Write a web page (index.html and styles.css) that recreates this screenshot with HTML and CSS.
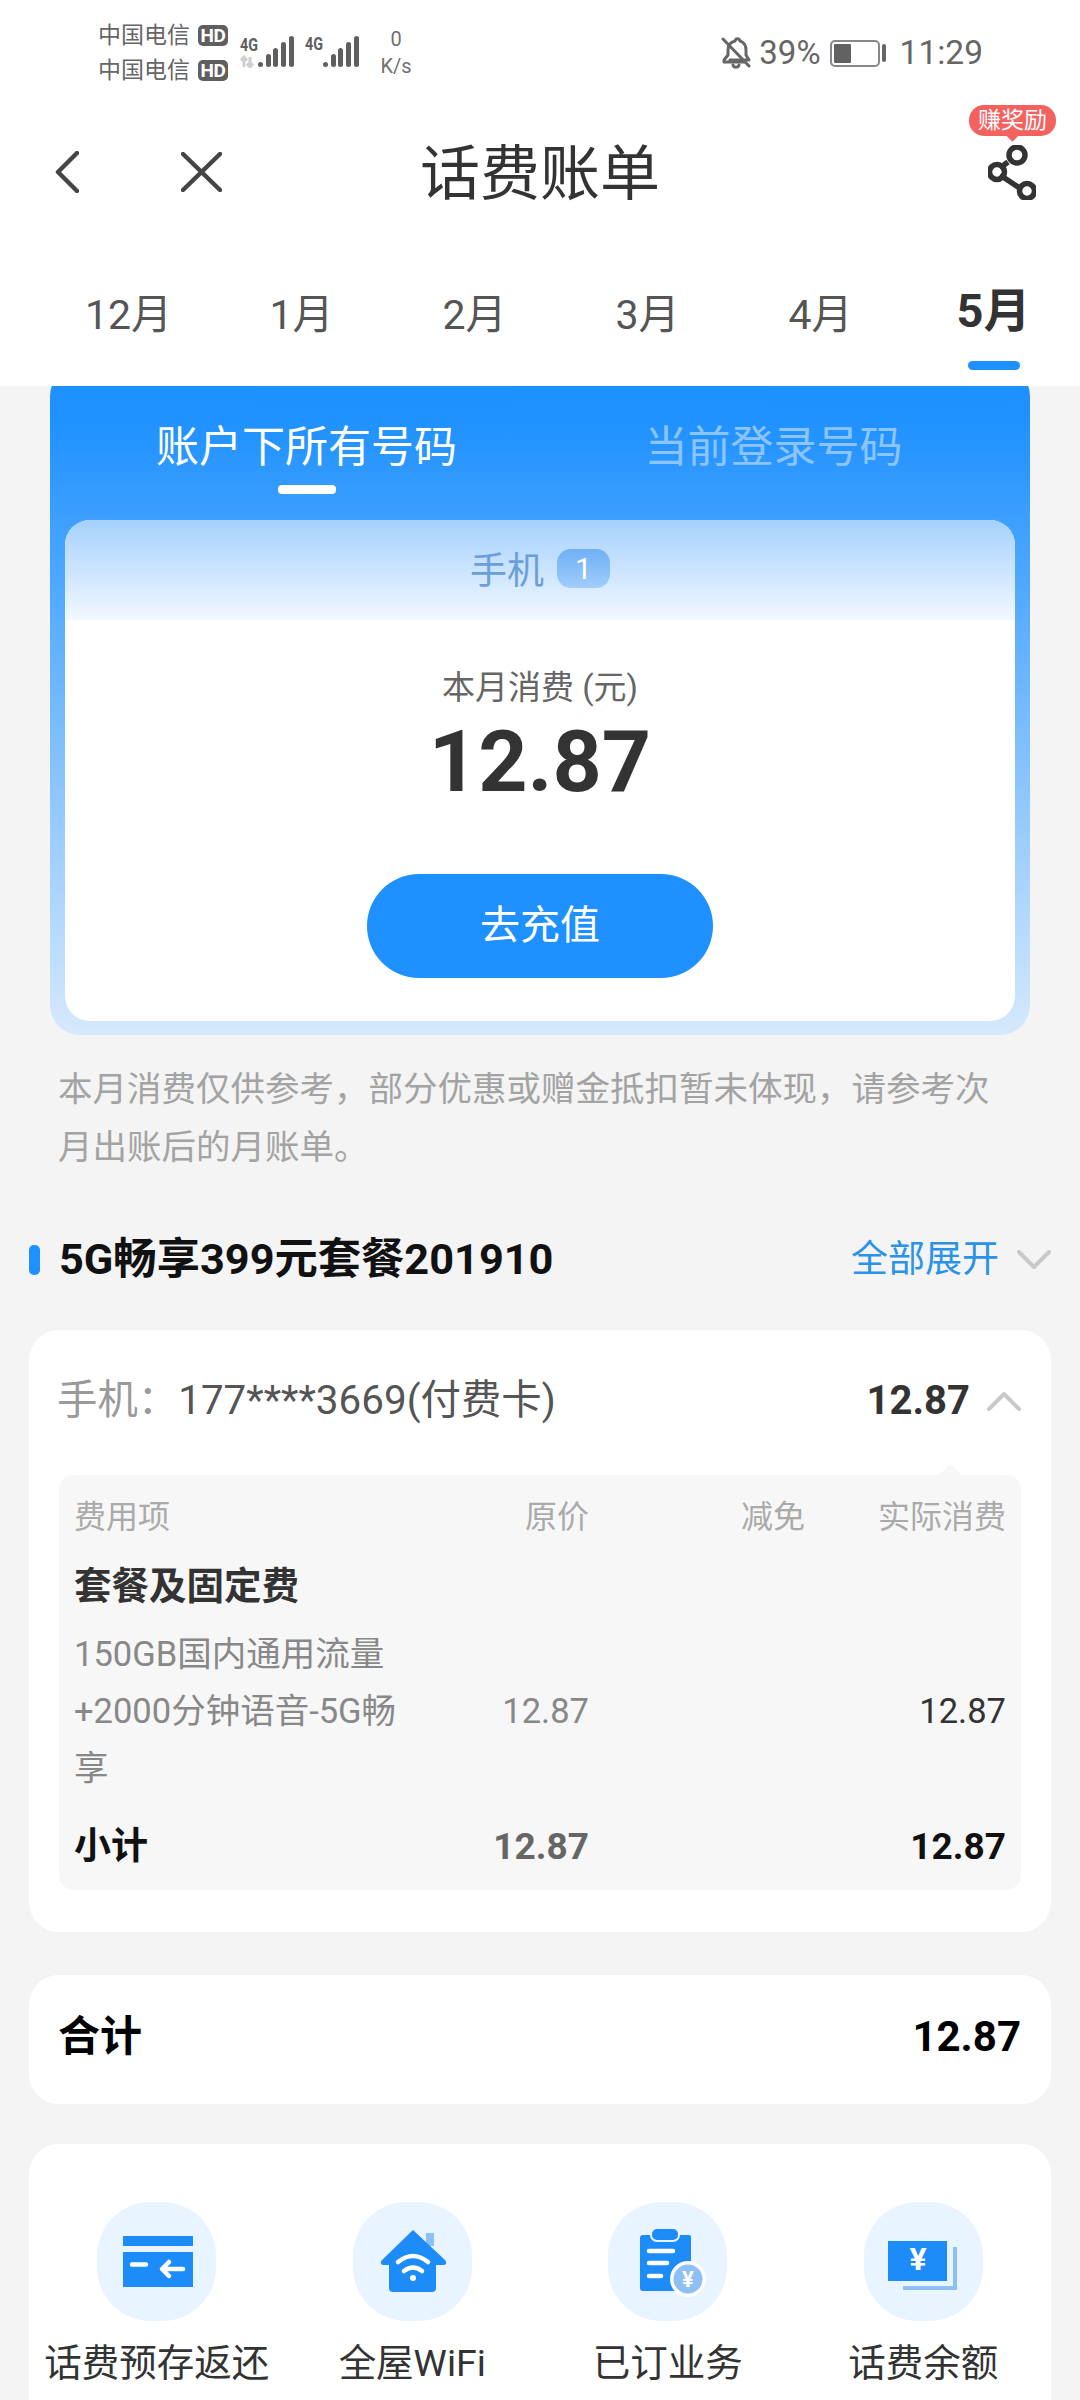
FILE: index.html
```
<!DOCTYPE html>
<html lang="zh-CN">
<head>
<meta charset="utf-8">
<title>话费账单</title>
<link rel="stylesheet" href="styles.css">
</head>
<body>
<header class="header">
  <div class="status">
    <div class="status-left">
      <div class="carriers">
        <div class="carrier"><span>中国电信</span><b class="hd">HD</b></div>
        <div class="carrier"><span>中国电信</span><b class="hd">HD</b></div>
      </div>
      <svg class="signal" width="54" height="42" viewBox="0 -10 54 42">
        <text class="sig-text" x="0" y="15" textLength="18" lengthAdjust="spacingAndGlyphs">4G</text>
        <path class="arrows" d="M4 31V21M1 24.500l3-3.500 3 3.500M10 21V31M7 27.500l3 3.500 3-3.500"/>
        <g class="bars"><rect x="18" y="26" width="5" height="5" rx="2.500"/><rect x="26" y="18" width="5" height="13" rx="2.500"/><rect x="33" y="12" width="5" height="19" rx="2.500"/><rect x="41" y="6" width="5" height="25" rx="2.500"/><rect x="49" y="0" width="5" height="31" rx="2.500"/></g>
      </svg>
      <svg class="signal" width="54" height="42" viewBox="0 -10 54 42">
        <text class="sig-text" x="0" y="14" textLength="18" lengthAdjust="spacingAndGlyphs">4G</text>
        <g class="bars"><rect x="18" y="26" width="5" height="5" rx="2.500"/><rect x="26" y="18" width="5" height="13" rx="2.500"/><rect x="33" y="12" width="5" height="19" rx="2.500"/><rect x="41" y="6" width="5" height="25" rx="2.500"/><rect x="49" y="0" width="5" height="31" rx="2.500"/></g>
      </svg>
      <div class="speed"><span>0</span><span>K/s</span></div>
    </div>
    <div class="status-right">
      <svg class="bell" width="30" height="32" viewBox="0 0 30 32">
        <path class="bell-line" d="M7 13c0-5 3-8 7-9 1-3 4-3 5 0 4 1 6 5 6 9v5l3 5H9M7 13v5l-4 5v2h21"/>
        <path class="bell-line" d="M12 28c1 3 5 3 6 0M2 2l26 27"/>
      </svg>
      <span class="status-text">39%</span>
      <div class="battery"><div class="battery-body"><div class="battery-fill"></div></div><div class="battery-nub"></div></div>
      <span class="status-text time">11:29</span>
    </div>
  </div>
  <nav class="nav">
    <div class="nav-left">
      <svg width="24" height="42" viewBox="0 0 24 42"><path class="nav-icon" d="M22 2L3 21l19 19"/></svg>
      <svg width="41" height="40" viewBox="0 0 41 40"><path class="nav-icon" d="M2 2l37 36M39 2L2 38"/></svg>
    </div>
    <h1 class="title">话费账单</h1>
    <div class="nav-right">
      <div class="share">
        <span class="reward">赚奖励</span>
        <svg width="48" height="55" viewBox="0 0 48 55">
          <path class="share-line" d="M20 17L12 23M12 30l21 14"/>
          <circle class="share-line" cx="29" cy="10" r="8"/><circle class="share-line" cx="9" cy="27" r="7.500"/><circle class="share-line" cx="39" cy="46" r="7.500"/>
        </svg>
      </div>
    </div>
  </nav>
  <div class="months">
    <div class="month">12月</div>
    <div class="month">1月</div>
    <div class="month">2月</div>
    <div class="month">3月</div>
    <div class="month">4月</div>
    <div class="month active">5月<i class="month-bar"></i></div>
  </div>
</header>
<main class="main">
  <section class="hero">
    <div class="hero-tabs">
      <div class="hero-tab on">账户下所有号码<i class="hero-bar"></i></div>
      <div class="hero-tab">当前登录号码</div>
    </div>
    <div class="hero-inner">
      <div class="hero-head"><span>手机</span><b class="count">1</b></div>
      <div class="hero-body">
        <div class="hero-label">本月消费 (元)</div>
        <div class="hero-amount">12.87</div>
        <button class="recharge">去充值</button>
      </div>
    </div>
  </section>
  <p class="note">本月消费仅供参考，部分优惠或赠金抵扣暂未体现，请参考次月出账后的月账单。</p>
  <div class="section-row">
    <div class="section-title"><i class="section-mark"></i><h2>5G畅享399元套餐201910</h2></div>
    <div class="expand"><span>全部展开</span>
      <svg width="34" height="20" viewBox="0 0 34 20"><path class="chev" d="M2 2l15 15L32 2"/></svg>
    </div>
  </div>
  <section class="card bill">
    <div class="phone-row">
      <div class="phone"><span class="phone-key">手机：</span>177****3669(付费卡)</div>
      <div class="phone-right"><b>12.87</b>
        <svg width="34" height="20" viewBox="0 0 34 20"><path class="chev" d="M2 18L17 3l15 15"/></svg>
      </div>
    </div>
    <div class="table">
      <div class="t-row t-head"><span>费用项</span><span>原价</span><span>减免</span><span>实际消费</span></div>
      <div class="t-group">套餐及固定费</div>
      <div class="t-row t-item"><span class="t-name">150GB国内通用流量+2000分钟语音-5G畅享</span><span>12.87</span><span></span><span class="t-real">12.87</span></div>
      <div class="t-row t-sum"><span>小计</span><span class="t-sum-mid">12.87</span><span></span><span>12.87</span></div>
    </div>
  </section>
  <section class="card total"><span>合计</span><span>12.87</span></section>
  <section class="card shortcuts">
    <div class="shortcut">
      <div class="blob"><svg width="119" height="119" viewBox="0 0 119 119">
        <path class="ic" d="M26 34h70v10H26zM26 50h70v35H26z"/>
        <path class="ic-w" d="M35 62.500h14M66 67h20M72 60l-7 7 7 7"/>
      </svg></div>
      <span class="shortcut-label">话费预存返还</span>
    </div>
    <div class="shortcut">
      <div class="blob"><svg width="119" height="119" viewBox="0 0 119 119">
        <path class="ic2" d="M73 31h8v13h-8z"/>
        <path class="ic" d="M60 28l32 30q3 4-1 5h-8v23q0 4-4 4H40q-4 0-4-4V63h-6q-4-1-1-5z"/>
        <path class="ic-w" d="M45 60q15-12 30 0M51 69q9-7 18 0"/>
        <circle class="ic-f" cx="60" cy="76" r="3"/>
      </svg></div>
      <span class="shortcut-label">全屋WiFi</span>
    </div>
    <div class="shortcut">
      <div class="blob"><svg width="119" height="119" viewBox="0 0 119 119">
        <path class="ic" d="M35 33h46q2 0 2 2v54H35q-3 0-3-3V36q0-3 3-3z"/>
        <rect class="ic" x="43" y="26" width="28" height="13" rx="6" stroke="#e8f4ff" stroke-width="2"/>
        <path class="ic-w" d="M41 49h24M41 61h18M41 74h12"/>
        <circle class="ic-f" cx="80" cy="77" r="18"/>
        <circle class="ic2" cx="80" cy="77" r="14.500"/>
        <text class="yen yen-s" x="80" y="85">¥</text>
      </svg></div>
      <span class="shortcut-label">已订业务</span>
    </div>
    <div class="shortcut">
      <div class="blob"><svg width="119" height="119" viewBox="0 0 119 119">
        <path class="ic2" d="M89 45h4v43H39v-4h50z"/>
        <path class="ic" d="M24 39h59v40H24z"/>
        <text class="yen" x="54" y="68">¥</text>
      </svg></div>
      <span class="shortcut-label">话费余额</span>
    </div>
  </section>
</main>
</body>
</html>
```
FILE: styles.css
```
* { box-sizing: border-box; }
html, body { margin: 0; padding: 0; }
body {
  width: 1080px;
  height: 2400px;
  overflow: hidden;
  background: #f4f4f4;
  font-family: Roboto, "Noto Sans CJK SC", sans-serif;
  color: #333;
}
h1, h2, p { margin: 0; font-weight: inherit; font-size: inherit; }
i { display: block; }

.header { position: relative; z-index: 2; background: #fff; height: 386px; padding-top: 24px; }

.status { display: flex; justify-content: space-between; align-items: center; height: 58px; padding: 0 97px 0 98px; }
.status-left { display: flex; align-items: center; }
.carriers { display: flex; flex-direction: column; gap: 9px; }
.carrier { display: flex; align-items: center; gap: 8px; height: 26px; font-size: 23px; line-height: 26px; color: #666; }
.hd { width: 30px; height: 21px; border-radius: 5px; background: #5f5f5f; color: #fff; font-size: 19px; line-height: 21px; text-align: center; font-weight: 700; letter-spacing: -0.500px; }
.signal { display: block; margin-left: 12px; margin-top: -12px; }
.signal + .signal { margin-left: 11px; }
.sig-text { font-size: 19px; font-weight: 700; fill: #5f5f5f; }
.bars rect { fill: #5f5f5f; }
.arrows { fill: none; stroke: #cfcfcf; stroke-width: 3; }
.speed { display: flex; flex-direction: column; align-items: center; width: 34px; margin-left: 20px; font-size: 20px; line-height: 27px; color: #707070; }

.status-right { display: flex; align-items: center; }
.bell { display: block; margin-right: 8px; }
.bell-line { fill: none; stroke: #666; stroke-width: 3; stroke-linecap: round; stroke-linejoin: round; }
.status-text { font-size: 33px; line-height: 40px; color: #666; }
.time { font-size: 33.500px; }
.battery { display: flex; align-items: center; margin: 0 14px 0 9px; }
.battery-body { width: 50px; height: 27px; border: 2px solid #888; border-radius: 5px; padding: 2px; }
.battery-fill { width: 17px; height: 19px; background: #626262; border-radius: 1px; }
.battery-nub { width: 4px; height: 18px; background: #666; border-radius: 2px; margin-left: 2px; }

.nav { display: grid; grid-template-columns: 1fr auto 1fr; align-items: center; height: 110px; margin-top: 38px; }
.nav-left { display: flex; align-items: center; gap: 102px; padding: 0 0 6px 55px; }
.nav-left svg { display: block; }
.nav-icon { fill: none; stroke: #444; stroke-width: 4.500; stroke-linecap: round; stroke-linejoin: round; }
.title { font-size: 60px; line-height: 80px; color: #333; font-weight: 400; }
.nav-right { display: flex; justify-content: flex-end; padding: 0 44px 6px 0; }
.share { position: relative; }
.share svg { display: block; }
.share-line { fill: none; stroke: #333; stroke-width: 5.500; }
.reward { position: absolute; top: -40px; right: -20px; width: 87px; height: 31px; border-radius: 15px; background: #f4625f; color: #fff; font-size: 23px; line-height: 31px; text-align: center; }
.reward::after { content: ""; position: absolute; left: 39px; bottom: -4px; width: 9px; height: 9px; background: #f4625f; transform: rotate(45deg); }

.months { display: grid; grid-template-columns: repeat(6, 1fr); padding: 55px 0 0 42px; }
.month { display: flex; flex-direction: column; align-items: center; font-size: 41px; line-height: 60px; color: #555; }
.month.active { font-size: 47px; font-weight: 700; color: #333; line-height: 52px; }
.month-bar { width: 52px; height: 9px; border-radius: 5px; background: #1e90ff; margin-top: 24px; }

.main { padding: 0 29px; }
.hero { margin: -20px 21px 0; padding: 51px 15px 14px; border-radius: 30px; background: linear-gradient(#1e90ff 0%, #1f91ff 8%, #d6e9fc 100%); }
.hero-tabs { display: grid; grid-template-columns: 1fr 1fr; padding: 0 8px; height: 103px; }
.hero-tab { display: flex; flex-direction: column; align-items: center; font-size: 43px; line-height: 60px; color: #8cc5fb; }
.hero-tab.on { color: #fff; }
.hero-bar { width: 58px; height: 9px; border-radius: 4px; background: #fff; margin-top: 8px; }
.hero-inner { background: #fff; border-radius: 25px; overflow: hidden; }
.hero-head { display: flex; justify-content: center; align-items: center; gap: 13px; height: 100px; padding-bottom: 4px; background: linear-gradient(#a5d1fd, #f2f8ff); font-size: 37px; color: #6a9fd8; }
.count { width: 53px; height: 39px; border-radius: 14px; background: linear-gradient(#6fb0f5, #a0cdfb); color: #fff; font-size: 30px; line-height: 39px; text-align: center; font-weight: 400; }
.hero-body { display: flex; flex-direction: column; align-items: center; padding: 48px 0 43px; }
.hero-label { font-size: 33px; line-height: 40px; color: #666; }
.hero-amount { font-size: 86px; line-height: 100px; font-weight: 700; color: #333; margin-top: 4px; }
.recharge { width: 346px; height: 104px; border: 0; border-radius: 52px; background: #1e90ff; color: #fff; font: inherit; font-size: 40px; margin-top: 62px; padding: 0 0 8px; }

.note { margin-top: 25px; padding: 0 30px 0 29px; font-size: 34.500px; line-height: 58px; color: #a3a3a3; }

.section-row { display: flex; justify-content: space-between; align-items: center; height: 60px; margin-top: 54px; }
.section-title { display: flex; align-items: center; gap: 19px; }
.section-mark { width: 11px; height: 30px; border-radius: 5px; background: #1e90ff; }
.section-title h2 { font-size: 43.300px; line-height: 60px; font-weight: 700; color: #111; }
.expand { display: flex; align-items: center; gap: 18px; font-size: 37px; line-height: 60px; color: #2a93e8; }
.expand svg, .phone-right svg { display: block; }
.chev { fill: none; stroke: #c9c9c9; stroke-width: 4; stroke-linecap: round; stroke-linejoin: round; }

.card { background: #fff; border-radius: 30px; }
.bill { margin-top: 40px; padding: 41px 30px 42px 30px; }
.phone-row { display: flex; justify-content: space-between; align-items: center; height: 60px; }
.phone { margin-left: -2px; font-size: 40.400px; line-height: 60px; color: #555; }
.phone-key { color: #9a9a9a; }
.phone-right { display: flex; align-items: center; gap: 17px; font-size: 40px; line-height: 60px; color: #333; }
.table { position: relative; margin-top: 44px; padding: 20px 15px 20px; background: #f7f7f7; border-radius: 15px; height: 415px; }
.table::before { content: ""; position: absolute; right: 63px; top: -8px; width: 16px; height: 16px; background: #f7f7f7; transform: rotate(45deg); }
.t-row { display: grid; grid-template-columns: 324px 191px 216px 201px; align-items: center; }
.t-row > span:not(:first-child) { text-align: right; }
.t-head { font-size: 32px; line-height: 44px; color: #aaa; }
.t-group { margin-top: 22px; font-size: 37.500px; line-height: 50px; font-weight: 700; color: #333; }
.t-item { margin-top: 15px; font-size: 34.500px; line-height: 57px; color: #888; }
.t-real { color: #333; }
.t-sum { margin-top: 25px; font-size: 37px; line-height: 50px; font-weight: 700; color: #111; }
.t-sum-mid { color: #666; }

.total { display: flex; justify-content: space-between; align-items: center; height: 129px; margin-top: 43px; padding: 0 30px 6px 29px; font-size: 42px; line-height: 60px; font-weight: 700; color: #000; }

.shortcuts { display: grid; grid-template-columns: repeat(4, 1fr); margin-top: 40px; padding-top: 58px; height: 300px; }
.shortcut { display: flex; flex-direction: column; align-items: center; }
.blob { width: 119px; height: 119px; border-radius: 54px; background: #e8f4ff; }
.blob svg { display: block; }
.ic { fill: #1e8cf8; }
.ic2 { fill: #8fc0f5; }
.ic-f { fill: #fff; }
.ic-w { fill: none; stroke: #fff; stroke-width: 4.500; stroke-linecap: round; stroke-linejoin: round; }
.yen { font-size: 32px; font-weight: 700; fill: #fff; text-anchor: middle; }
.yen-s { font-size: 22px; }
.shortcut-label { margin-top: 17px; font-size: 37.500px; line-height: 50px; color: #333; }
```
